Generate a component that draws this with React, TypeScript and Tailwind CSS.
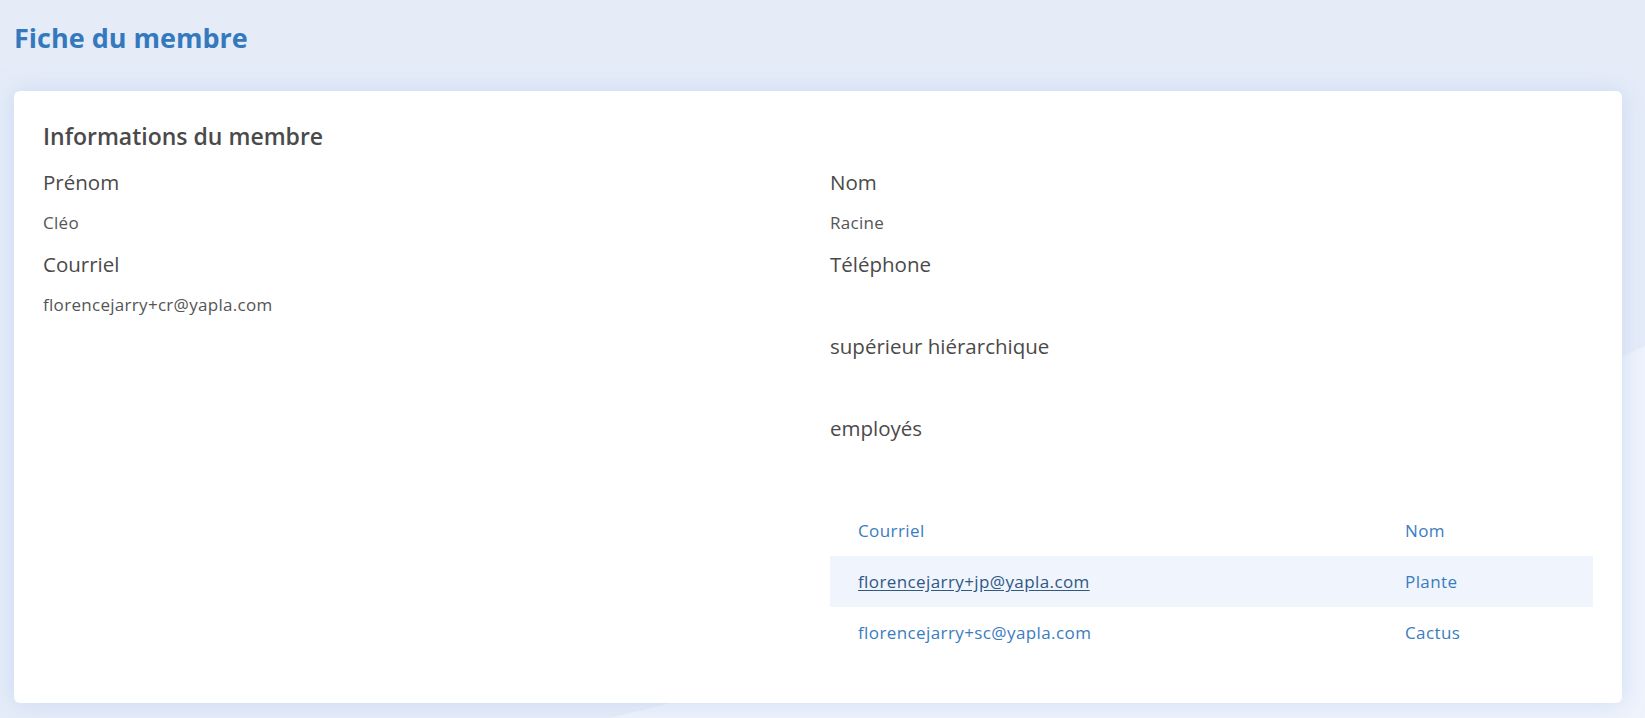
import React from 'react';

type Field = { label: string; value?: string };

const leftFields: Field[] = [
  { label: 'Prénom', value: 'Cléo' },
  { label: 'Courriel', value: 'florencejarry+cr@yapla.com' },
];

const rightFields: Field[] = [
  { label: 'Nom', value: 'Racine' },
  { label: 'Téléphone' },
  { label: 'supérieur hiérarchique' },
  { label: 'employés' },
];

const employees = [
  { email: 'florencejarry+jp@yapla.com', name: 'Plante', hovered: true },
  { email: 'florencejarry+sc@yapla.com', name: 'Cactus', hovered: false },
];

function FieldBlock({ label, value }: Field) {
  return (
    <div className="flex flex-col">
      <span className="h-[28px] text-[20.5px] leading-[28px] font-medium text-[#4a4a4a]">{label}</span>
      <span className="mt-[15px] mb-[15px] h-[24px] text-[17px] leading-[24px] tracking-[0.3px] text-[#555]">
        {value ?? '\u00a0'}
      </span>
    </div>
  );
}

function EmployeeTable() {
  return (
    <table className="mt-[10px] w-full border-collapse text-[17px] tracking-[0.4px] text-[#3a7cc0]">
      <thead>
        <tr className="h-[50px]">
          <th className="w-[575px] px-[28px] text-left font-medium">Courriel</th>
          <th className="px-0 text-left font-medium">Nom</th>
        </tr>
      </thead>
      <tbody>
        {employees.map((e) => (
          <tr key={e.email} className={e.hovered ? 'h-[51px] bg-[#eff4fd]' : 'h-[52px]'}>
            <td className="px-[28px]">
              <span className={e.hovered ? 'text-[#2f5883] underline underline-offset-2' : ''}>{e.email}</span>
            </td>
            <td>{e.name}</td>
          </tr>
        ))}
      </tbody>
    </table>
  );
}

export default function App() {
  return (
    <div
      className="relative h-[718px] w-full overflow-hidden bg-[#e5ecf8]"
      style={{ fontFamily: '"Open Sans", "Noto Sans", sans-serif' }}
    >
      <svg className="absolute inset-0 h-full w-full" viewBox="0 0 1645 718" preserveAspectRatio="none">
        <path d="M610 718 Q1100 600 1645 346 L1645 718 Z" fill="#eef3fc" />
      </svg>
      <div className="relative">
        <h1 className="px-[14px] pt-[20px] text-[27px] leading-[36px] font-bold text-[#3479bd]">Fiche du membre</h1>
        <div className="mt-[35px] ml-[14px] w-[1608px] rounded-md bg-white px-[29px] pt-7 pb-[44px] shadow-[0_0_22px_rgba(185,205,240,0.6)]">
          <h2 className="text-[23px] leading-[34px] font-semibold text-[#4a4a4a]">Informations du membre</h2>
          <div className="mt-[15px] grid grid-cols-2 gap-x-6">
            <div className="flex flex-col">
              {leftFields.map((f) => (
                <FieldBlock key={f.label} {...f} />
              ))}
            </div>
            <div className="flex flex-col">
              {rightFields.map((f) => (
                <FieldBlock key={f.label} {...f} />
              ))}
              <EmployeeTable />
            </div>
          </div>
        </div>
      </div>
    </div>
  );
}
